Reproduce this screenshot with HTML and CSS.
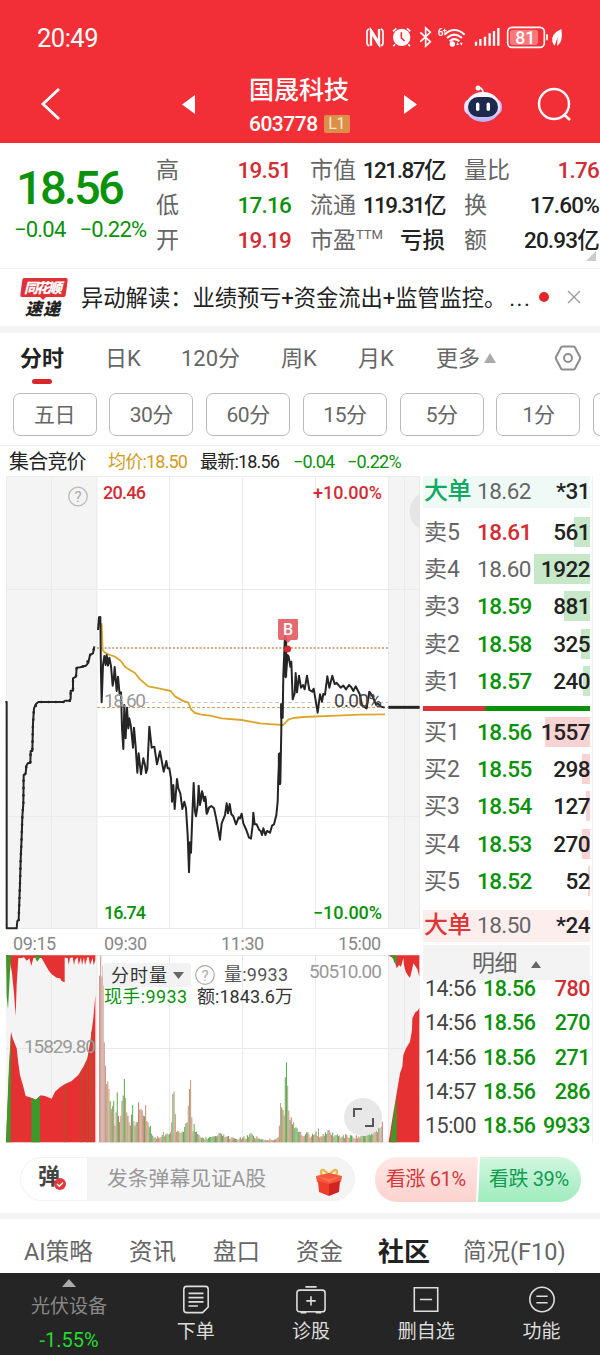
FILE: index.html
```
<!DOCTYPE html>
<html lang="zh-CN">
<head>
	<meta charset="utf-8">
	<title>国晟科技 603778</title>
	<link rel="stylesheet" href="styles.css">
</head>
<body>

	<header class="header">
		<div class="status">
			<span class="clock">20:49</span>
			<svg class="statusIcons" viewBox="195 75 600 75">
				<g fill="none" stroke="#fff" stroke-width="5">
					<path d="M208 87q-7 1-7 9v32q0 8 7 9M242 87q7 1 7 9v32q0 8-7 9"/>
					<path d="M213 137V92l24 40V87" stroke-width="7"/>
					<path d="M213 88l24 38M213 99l24 38" stroke-width="4"/>
					<path d="M279 94l10-9M331 94l-10-9M285 133l-5 6M325 133l5 6" stroke-width="5"/>
					<path d="M361 97l30 28-14 13V84l14 13-30 28" stroke-width="5"/>
					<path d="M433 104q30-28 61 0M441 114q22-20 45 0M449 124q14-13 29 0" stroke-width="6"/>
					<path d="M528 137v-12M541 137v-20M555 137v-27M569 137v-37M582 137V93M595 137V84" stroke-width="7"/>
					<rect x="623" y="82" width="110" height="60" rx="13" stroke-width="5"/>
					<path d="M741 103v18" stroke-width="5"/>
				</g>
				<circle cx="305" cy="112" r="26" fill="#fff"/>
				<path d="M304 97v17l10 9" fill="none" stroke="#f22f36" stroke-width="5"/>
				<circle cx="457" cy="132" r="8" fill="#fff"/>
				<path d="M469 135l4-9 4 9zM480 128l4 9 4-9z" fill="#fff"/>
				<rect x="630" y="89" width="84" height="46" rx="8" fill="#f8797c"/>
				<path d="M784 87q-32 15-27 38 2 9 7 12l9-25-2 26q20-12 13-51z" fill="#fff"/>
				<text x="413" y="107" class="wifiText">6</text>
				<path d="M428 92h12M434 86v12" stroke="#fff" stroke-width="3"/>
				<text x="676" y="131" class="batteryText">81</text>
			</svg>
		</div>
		<div class="titleBar">
			<svg class="back" viewBox="0 0 24 36"><path d="M21 3L5 18l16 15" fill="none" stroke="#fff" stroke-width="2.8"/></svg>
			<svg class="arrow" viewBox="0 0 14 20"><path d="M13 1v19L0 10.500z" fill="#fff"/></svg>
			<div class="stock">
				<div class="stockName">国晟科技</div>
				<div class="stockCode"><span>603778</span><span class="level">L1</span></div>
			</div>
			<svg class="arrow" viewBox="0 0 14 20"><path d="M1 1v19l13-9.500z" fill="#fff"/></svg>
			<svg class="robot" viewBox="0 0 40 38">
				<defs>
					<linearGradient id="shell" x1="0" y1="0" x2="0" y2="1"><stop offset="0" stop-color="#fff"/><stop offset=".6" stop-color="#e6d8ff"/><stop offset="1" stop-color="#b3aefa"/></linearGradient>
				</defs>
				<path d="M14 3q6-1 6 5" fill="none" stroke="#f4dfff" stroke-width="2"/>
				<circle cx="15" cy="3" r="2.500" fill="#fff"/>
				<ellipse cx="5" cy="22" rx="4" ry="7" fill="#efdcff"/>
				<ellipse cx="35" cy="22" rx="4" ry="7" fill="#c9b4ff"/>
				<ellipse cx="20" cy="22" rx="17.500" ry="15" fill="url(#shell)"/>
				<rect x="5" y="12" width="30" height="20" rx="10" fill="#1d2a4d"/>
				<rect x="13" y="17.500" width="3.400" height="8.500" rx="1.700" fill="#fff"/>
				<rect x="23.600" y="17.500" width="3.400" height="8.500" rx="1.700" fill="#fff"/>
			</svg>
			<svg class="search" viewBox="0 0 36 36"><circle cx="17" cy="17" r="15" fill="none" stroke="#fff" stroke-width="2.400"/><path d="M26.500 27l6.500 6" stroke="#fff" stroke-width="2.600"/></svg>
		</div>
	</header>

	<section class="quote">
		<div class="lastPrice">
			<div class="price green">18.56</div>
			<div class="change green"><span>−0.04</span><span>−0.22%</span></div>
		</div>
		<dl class="stats">
			<dt>高</dt><dd class="red">19.51</dd>
			<dt>低</dt><dd class="green">17.16</dd>
			<dt>开</dt><dd class="red">19.19</dd>
		</dl>
		<dl class="stats tight">
			<dt>市值</dt><dd>121.87亿</dd>
			<dt>流通</dt><dd>119.31亿</dd>
			<dt>市盈<sup>TTM</sup></dt><dd class="loss">亏损</dd>
		</dl>
		<dl class="stats">
			<dt>量比</dt><dd class="red">1.76</dd>
			<dt>换</dt><dd>17.60%</dd>
			<dt>额</dt><dd>20.93亿</dd>
		</dl>
		<i class="corner"></i>
	</section>

	<section class="news">
		<svg class="newsLogo" viewBox="0 0 48 40">
			<path d="M4 1h42q2 0 1.700 2l-2 15q-.3 2-2 2H26l-3 3-3-3H2q-2 0-1.700-2l2-15Q2.500 1 4 1z" fill="#df3238"/>
			<text x="4" y="16" class="logoTop" textLength="38">同花顺</text>
			<text x="5" y="37.500" class="logoBottom" textLength="35">速递</text>
		</svg>
		<span class="newsText">异动解读：<span class="newsBody">业绩预亏+资金流出+监管监控。</span><span class="more">...</span></span>
		<i class="dot"></i>
		<svg class="close" viewBox="0 0 14 14"><path d="M1 1l12 12M13 1L1 13" stroke="#999" stroke-width="1.300"/></svg>
	</section>

	<nav class="periods">
		<span class="active">分时</span>
		<span>日K</span>
		<span>120分</span>
		<span>周K</span>
		<span>月K</span>
		<span>更多<i class="up"></i></span>
		<svg class="gear" viewBox="0 0 28 26"><path d="M8.500 1.500h11q1 0 1.500 1l5 9.500q.5 1 0 2l-5 9.500q-.5 1-1.500 1h-11q-1 0-1.500-1L2 14q-.5-1 0-2l5-9.500q.5-1 1.500-1z" fill="none" stroke="#8d8d8d" stroke-width="2"/><circle cx="14" cy="13" r="4" fill="none" stroke="#8d8d8d" stroke-width="2"/></svg>
	</nav>
	<div class="chips">
		<span>五日</span><span>30分</span><span>60分</span><span>15分</span><span>5分</span><span>1分</span><span></span>
	</div>

	<div class="legend">
		<span class="auction">集合竞价</span>
		<span class="avg">均价:18.50</span>
		<span>最新:18.56</span>
		<span class="green">−0.04</span>
		<span class="green">−0.22%</span>
	</div>

	<main class="main">
		<div class="charts">
			<svg class="priceChart" viewBox="0 476 420 454">
				<rect x="6" y="476" width="91" height="453" fill="#f4f4f4"/>
				<rect x="388" y="476" width="32" height="453" fill="#f4f4f4"/>
				<path d="M6 476.500H420M6 589.500H420M6 816.500H420M6 928.500H420M6.500 476V929M51.500 476V929M97 476V929M169.500 476V929M242.500 476V929M315.500 476V929M388.500 476V929M404.500 476V929M419.500 476V929" stroke="#ebebeb" fill="none"/>
				<path d="M420 494a20 20 0 0 0 0 35z" fill="#e5e5e5"/>
				<circle cx="78" cy="496.500" r="9.300" fill="none" stroke="#bbb" stroke-width="1.300"/>
				<text x="78" y="502" class="help">?</text>
				<path d="M97 648H388" stroke="#c29062" stroke-width="1.500" stroke-dasharray="2 1.800"/>
				<path d="M145 702.500H388" stroke="#c9c9c9" stroke-dasharray="4 2.500"/>
				<path d="M97 707.500H388" stroke="#cf9c73" stroke-dasharray="3 2"/>
				<text x="103" y="499" class="red" textLength="43">20.46</text>
				<text x="382" y="499" class="red end" textLength="69">+10.00%</text>
				<text x="104" y="919" class="green" textLength="42">16.74</text>
				<text x="382" y="919" class="green end" textLength="69">−10.00%</text>
				<g transform="translate(0 475) scale(.33333)" fill="none" stroke-linejoin="round">
					<path stroke="#dda62b" stroke-width="5.500" d="M305 445L308 525 315 533 330 540 345 545 362 557 375 575 390 585 405 594 420 613 445 634 480 641 512 648 525 664 548 677 565 683 573 703 585 714 605 719 630 722 665 730 725 735 780 745 820 748 850 750 865 734 880 729 910 726 1010 722 1080 719 1155 718"/>
					<path stroke="#252525" stroke-width="6" d="M16 681H20V1360H50L52 1338 56 1335 60 1225 62 1155 65 1085 67 1025 70 985 71 900 77 896 79 872 84 864 91 864 92 828 97 828 99 745 102 700 108 687 115 681H190L195 677 208 677 212 672V647H219V610L228 605 230 578 240 577 258 572 265 563 270 540 279 535 283 514"/>
					<path stroke="#252525" stroke-width="8" stroke-linecap="round" stroke-dasharray="0 22" d="M56 1335L60 1225 62 1155 65 1085 67 1025 70 985 71 900 77 896 79 872 91 864 92 828 97 828 99 745 102 700 115 681H208L212 672V647H219V610L228 605 230 578 258 572 270 540 279 535 283 514"/>
					<path stroke="#252525" stroke-width="6" d="M294 465L297 427 301 426 303 600 305 682 309 570 313 543 317 570 320 540 324 572 328 548 333 573 338 632 341 615 344 576 350 648 354 605 359 660 363 652 366 760 370 822 373 690 377 790 381 698 385 760 388 730 393 756 399 818 402 758 407 815 412 893 416 835 423 898 430 850 435 870 438 894 442 882 448 755 455 818 463 815 471 868 480 829 491 890 499 858 503 880 508 880 513 910 516 980 520 930 524 1002 531 912 535 940 541 955 547 1002 553 980 558 1000 563 1080 567 1192 570 1102 573 1133 577 1020 581 924 585 1010 588 1024 593 990 596 932 600 990 606 949 611 970 616 965 621 1015 626 1000"/>
				</g>
				<g transform="translate(200 475) scale(.33333)" fill="none" stroke-linejoin="round">
					<path stroke="#252525" stroke-width="6" d="M0 985L6 950 12 978 16 970 20 1016 27 998 34 993 42 1000 48 1028 55 1065 60 1094 65 1045 75 1020 80 985 84 1015 89 987 94 1018 100 1024 108 1048 116 1027 120 1030 125 1016 130 1045 139 1065 147 1088 153 1091 158 1050 160 1013 164 1048 170 1048 177 1064 182 1068 186 1080 190 1060 196 1080 201 1068 210 1073 216 1052 222 1048 229 1020 233 980 235 910 239 835 241 925 244 760 244 690 248 728 250 600 255 480 257 607 263 540 266 545 271 575 274 560 278 673 284 655 287 594 291 652 297 602 303 638 309 630 314 643 321 602 328 645 337 650 341 641 347 676 353 713 360 658 366 680 370 657 375 659 382 604 388 638 397 602 404 627 410 624 422 638 430 632 438 643 447 630 454 637 460 648 467 634 479 657 486 690 495 697 500 700 508 650 519 667 528 689 534 685 541 694 554 698"/>
					<path stroke="#252525" stroke-width="9" d="M238 835V930M245 685V730M257 485V605"/>
					<path d="M565 697H659" stroke="#252525" stroke-width="9"/>
				</g>
				<text x="104" y="707" class="mid" textLength="42">18.60</text>
				<text x="382" y="707" class="mid zero end" textLength="48">0.00%</text>
				<path d="M279 619h18q1 0 1 1v18q0 2-2 2h-5l-3 3-3-3h-5q-2 0-2-2v-18q0-1 1-1z" fill="#e15e65" opacity=".92"/>
				<text x="288" y="635" class="flag">B</text>
				<circle cx="287.500" cy="649" r="3.600" fill="#d62b35"/>
			</svg>
			<div class="times"><span>09:15</span><span>09:30</span><span>11:30</span><span>15:00</span></div>
			<svg class="volumeChart" viewBox="0 955 420 188">
				<rect x="6" y="955" width="91" height="187" fill="#f4f4f4"/>
				<rect x="388" y="955" width="32" height="187" fill="#f4f4f4"/>
				<path d="M6 955.500H420M6 1048.500H420M6 1142H420M51.500 955V1142M97 955V1142M169.500 955V1142M242.500 955V1142M315.500 955V1142M388.500 955V1142M404.500 955V1142" stroke="#e9e9e9" fill="none"/>
				<g transform="translate(0 950) scale(.33333)">
					<path fill="#e63132" d="M18 16H286V30L281 46 278 24 270 44 266 22 262 22 255 45 252 22 246 45 243 22 236 45 233 22 225 30 222 45 218 22 210 24 206 45 203 24 194 23V97L185 93 180 85 170 83 155 73 145 60 135 42 125 25 110 22 100 25 94 48 88 25 80 32 72 22 65 24 55 24 50 105 47 198 42 130 36 70 30 35 18 20z"/>
					<path fill="#3f982a" d="M18 16H34L30 65 24 178 20 140zM105 16H124L119 25 112 35 107 27z"/>
					<path fill="#e63132" d="M18 577L27 370 33 245 38 265 50 295 55 340 60 375 70 410 77 438 90 442 108 449 122 436 135 438 155 446 165 425 180 412 195 402 215 393 235 375 250 350 262 325 270 280 280 205 286 135V577z"/>
					<path fill="#3f982a" d="M18 577L27 345 33 250 32 577zM94 577V443L108 449 120 437V577z"/>
					<path d="M193 405V577M244 362V577M263 325V577M275 245V577" stroke="#986025" stroke-width="3"/>
				</g>
				<g id="volumeBars" transform="translate(0 950) scale(.33333)"></g>
				<g transform="translate(200 950) scale(.33333)">
					<path fill="#e63132" d="M564 16H658V80L652 58 646 48 640 40 636 60 630 83 625 78 617 65 612 45 610 24 603 50 597 45 590 55 583 30 575 22z"/>
					<path fill="#3f982a" d="M570 16H590V42L583 38 579 23z"/>
					<path fill="#e63132" d="M566 577L578 500 590 430 600 370 607 350 610 315 618 295 630 275 636 240 637 205 646 187 653 182 658 174V577z"/>
					<path fill="#3f982a" d="M571 577L580 500 590 437V577z"/>
				</g>
				<text x="24" y="1053" class="mid" textLength="72">15829.80</text>
				<rect x="103" y="963" width="88" height="24" rx="3" fill="#f2f2f2"/>
				<text x="111" y="982" class="dark" textLength="56">分时量</text>
				<path d="M173 972h11l-5.500 7z" fill="#666"/>
				<circle cx="205" cy="975" r="9.300" fill="none" stroke="#aaa" stroke-width="1.200"/>
				<text x="205" y="981" class="help">?</text>
				<text x="224" y="981" class="dark grey" textLength="64">量:9933</text>
				<text x="382" y="978" class="mid end" textLength="73">50510.00</text>
				<text x="104" y="1003" class="green hand" textLength="83">现手:9933</text>
				<text x="197" y="1003" class="dark" textLength="96">额:1843.6万</text>
				<circle cx="363" cy="1117" r="19" fill="#e5e5e5" opacity=".9"/>
				<path d="M354 1117v-8h8M373 1118v8h-8" fill="none" stroke="#555" stroke-width="2"/>
			</svg>
		</div>

		<aside class="book">
			<div class="big bigSell"><span>大单</span><span>18.62</span><span>*31</span></div>
			<div class="side">
				<div class="level5"><span>卖5</span><span class="red">18.61</span><span class="amount"><i class="bar" style="width:16px"></i>561</span></div>
				<div class="level5"><span>卖4</span><span class="grey">18.60</span><span class="amount"><i class="bar" style="width:56px"></i>1922</span></div>
				<div class="level5"><span>卖3</span><span class="green">18.59</span><span class="amount"><i class="bar" style="width:26px"></i>881</span></div>
				<div class="level5"><span>卖2</span><span class="green">18.58</span><span class="amount"><i class="bar" style="width:9px"></i>325</span></div>
				<div class="level5"><span>卖1</span><span class="green">18.57</span><span class="amount"><i class="bar" style="width:7px"></i>240</span></div>
			</div>
			<div class="ratio"><i style="width:62px"></i></div>
			<div class="side buy">
				<div class="level5"><span>买1</span><span class="green">18.56</span><span class="amount"><i class="bar" style="width:45px"></i>1557</span></div>
				<div class="level5"><span>买2</span><span class="green">18.55</span><span class="amount"><i class="bar" style="width:8px"></i>298</span></div>
				<div class="level5"><span>买3</span><span class="green">18.54</span><span class="amount"><i class="bar" style="width:4px"></i>127</span></div>
				<div class="level5"><span>买4</span><span class="green">18.53</span><span class="amount"><i class="bar" style="width:8px"></i>270</span></div>
				<div class="level5"><span>买5</span><span class="green">18.52</span><span class="amount"><i class="bar" style="width:2px"></i>52</span></div>
			</div>
			<div class="big bigBuy"><span>大单</span><span>18.50</span><span>*24</span></div>
			<div class="detailHead">明细<i class="up small"></i></div>
			<div class="details">
				<div><span>14:56</span><span class="green">18.56</span><span class="red">780</span></div>
				<div><span>14:56</span><span class="green">18.56</span><span class="green">270</span></div>
				<div><span>14:56</span><span class="green">18.56</span><span class="green">271</span></div>
				<div><span>14:57</span><span class="green">18.56</span><span class="green">286</span></div>
				<div><span>15:00</span><span class="green">18.56</span><span class="green">9933</span></div>
			</div>
		</aside>
	</main>

	<section class="barrage">
		<div class="barrageInput">
			<div class="barrageIcon">
				<span>弹</span>
				<svg viewBox="0 0 12 12"><circle cx="6" cy="6" r="6" fill="#e03a3c"/><path d="M3 6l2.300 2.300L9 4.500" fill="none" stroke="#fff" stroke-width="1.300"/></svg>
			</div>
			<span class="placeholder">发条弹幕见证A股</span>
			<svg class="gift" viewBox="0 0 28 30">
				<path d="M14 8Q6-1 6 6q0 3 8 3 8 0 8-3 0-7-8 2z" fill="none" stroke="#edb64b" stroke-width="2.500"/>
				<path d="M1 9l13-3 13 3-1 6-12 3L2 15z" fill="#f4573c"/>
				<path d="M3 14l11 3v12L4 25z" fill="#f03c2b"/>
				<path d="M25 14l-11 3v12l10-4z" fill="#cf2420"/>
				<path d="M1 9l13 3 13-3-13 6z" fill="#f9714f"/>
			</svg>
		</div>
		<div class="vote"><span class="voteUp">看涨 61%</span><span class="voteDown">看跌 39%</span></div>
	</section>

	<nav class="sections">
		<span>AI策略</span><span>资讯</span><span>盘口</span><span>资金</span><span class="active">社区</span><span>简况(F10)</span>
	</nav>

	<footer class="toolbar">
		<div class="sector">
			<i class="up"></i>
			<span>光伏设备</span>
			<span class="sectorChange">-1.55%</span>
		</div>
		<div class="tool">
			<svg viewBox="0 0 32 32"><path d="M6 2h20q3 0 3 3v19l-6 6H6q-3 0-3-3V5q0-3 3-3zM8 9.500h16M8 14h16M8 18.500h16M8 23h10"/></svg>
			<span>下单</span>
		</div>
		<div class="tool">
			<svg viewBox="0 0 32 32"><path d="M4 6h24q3 0 3 3v17q0 3-3 3H4q-3 0-3-3V9q0-3 3-3zM10 2.500h12M16 12.500v10M11 17.500h10M5 30h6M21 30h6"/></svg>
			<span>诊股</span>
		</div>
		<div class="tool">
			<svg viewBox="0 0 32 32"><path d="M3.500 3.500h25v25h-25zM9.500 16h13"/></svg>
			<span>删自选</span>
		</div>
		<div class="tool">
			<svg viewBox="0 0 32 32"><circle cx="16" cy="16" r="13"/><path d="M10 12.500h12M10 19.500h12"/></svg>
			<span>功能</span>
		</div>
	</footer>

	<script src="main.js"></script>
</body>
</html>
```

FILE: styles.css
```
* {
	box-sizing: border-box;
}
body {
	margin: 0;
	width: 600px;
	height: 1355px;
	overflow: hidden;
	background: #fff;
	color: #222;
	font-family: Roboto, "Noto Sans CJK SC", sans-serif;
	font-size: 22px;
}
svg {
	display: block;
	flex: none;
}
i {
	display: block;
}
.red {
	color: #d42c33;
	fill: #d42c33;
}
.green {
	color: #0a930a;
	fill: #0a930a;
}
.grey {
	color: #666;
	fill: #666;
}

/* header */
.header {
	height: 143px;
	background: #f22f36;
	color: #fff;
}
.status {
	display: flex;
	justify-content: space-between;
	align-items: center;
	height: 75px;
	padding: 0 35px 0 37px;
}
.clock {
	font-size: 25.500px;
	letter-spacing: -0.5px;
}
.statusIcons {
	width: 200px;
	height: 25px;
}
.wifiText {
	fill: #fff;
	font-size: 30px;
	font-weight: 500;
}
.batteryText {
	fill: #fff;
	font-size: 53px;
	font-weight: 500;
	text-anchor: middle;
}
.titleBar {
	display: flex;
	align-items: center;
	height: 58px;
	padding-left: 38px;
}
.back {
	width: 24px;
	height: 36px;
	margin-right: 120px;
}
.arrow {
	width: 14px;
	height: 20px;
}
.stock {
	width: 104px;
	margin: 5px 50px 0 53px;
}
.stockName {
	height: 34px;
	line-height: 34px;
	font-size: 25px;
	font-weight: 500;
	white-space: nowrap;
}
.stockCode {
	display: flex;
	align-items: center;
	height: 32px;
	font-size: 21px;
	font-weight: 500;
	letter-spacing: -0.5px;
}
.level {
	width: 26px;
	height: 18px;
	margin-left: 6px;
	border-radius: 2px;
	background: #dc8f48;
	color: #ffe9d0;
	font-size: 16px;
	font-weight: 400;
	line-height: 18px;
	text-align: center;
}
.robot {
	width: 40px;
	height: 38px;
	margin-left: 46px;
}
.search {
	width: 36px;
	height: 36px;
	margin: 2px 0 0 34px;
}

/* quote */
.quote {
	position: relative;
	display: grid;
	grid-template-columns: 142px 154px 154px 135px;
	height: 125px;
	padding: 10px 0 0 14px;
}
.price {
	height: 66px;
	padding-left: 2px;
	font-size: 47px;
	font-weight: 500;
	line-height: 70px;
	letter-spacing: -2.800px;
}
.change {
	display: flex;
	gap: 14px;
	line-height: 22px;
	letter-spacing: -0.8px;
	white-space: nowrap;
}
.stats {
	display: grid;
	grid-template-columns: 46px 1fr;
	grid-auto-rows: 35px;
	width: 135px;
	margin: 0;
	line-height: 35px;
	white-space: nowrap;
}
.stats dt {
	color: #666;
	font-size: 23px;
}
.stats dd {
	margin: 0;
	font-size: 22.500px;
	font-weight: 500;
	letter-spacing: -0.8px;
	text-align: right;
}
.stats.tight dd {
	letter-spacing: -1.500px;
}
.stats.tight .loss {
	letter-spacing: 0;
}
.stats sup {
	font-size: 13px;
	line-height: 1px;
}
.corner {
	position: absolute;
	right: 4px;
	bottom: 7px;
	border-bottom: 10px solid #ccc;
	border-left: 10px solid transparent;
}

/* news */
.news {
	display: flex;
	align-items: center;
	height: 65px;
	padding: 0 19px 0 20px;
	border-top: 1px solid #f2f2f2;
	border-bottom: 7px solid #f4f4f4;
}
.newsLogo {
	width: 48px;
	height: 40px;
	margin-top: -2px;
}
.logoTop {
	fill: #fff;
	font-size: 14px;
	font-weight: 900;
	font-style: italic;
}
.logoBottom {
	fill: #222;
	font-size: 17px;
	font-weight: 900;
	font-style: italic;
}
.newsText {
	width: 457px;
	margin: -3px 0 0 13px;
	font-size: 22.300px;
	white-space: nowrap;
}
.newsBody {
	letter-spacing: -0.1px;
}
.more {
	margin-left: 3px;
	letter-spacing: 1.500px;
}
.dot {
	width: 10px;
	height: 10px;
	margin: -2px 0 0 1px;
	border-radius: 5px;
	background: #e0252c;
}
.close {
	width: 14px;
	height: 14px;
	margin: -2px 0 0 auto;
}

/* period tabs */
.periods {
	display: grid;
	grid-template-columns: 85px 76px 100px 77px 78px 118px 28px;
	align-items: center;
	height: 60px;
	padding-left: 20px;
	color: #666;
	line-height: 52px;
}
.periods span {
	height: 60px;
	white-space: nowrap;
}
.periods .active {
	color: #222;
	font-weight: 700;
}
.periods .active::after {
	content: "";
	display: block;
	width: 20px;
	height: 5px;
	margin: -6px 0 0 12px;
	border-radius: 3px;
	background: #d8282e;
}
.up {
	display: inline-block;
	margin-left: 4px;
	border: 6px solid transparent;
	border-top: 0;
	border-bottom: 10px solid #aaa;
	vertical-align: 3px;
}
.gear {
	width: 28px;
	height: 26px;
	margin-top: -10px;
}
.chips {
	display: flex;
	gap: 12.800px;
	height: 53px;
	padding-left: 12.500px;
	border-bottom: 1px solid #eee;
	overflow: hidden;
}
.chips span {
	flex: none;
	width: 84px;
	height: 43px;
	border: 1px solid #bbb;
	border-radius: 7px;
	color: #666;
	font-size: 21px;
	line-height: 43px;
	text-align: center;
	letter-spacing: -0.5px;
}
.chips span:last-child {
	width: 20px;
	border-right: 0;
	border-radius: 7px 0 0 7px;
}

/* legend */
.legend {
	display: grid;
	grid-template-columns: 99px 92px 93px 54px 80px;
	height: 30px;
	padding-left: 9px;
	font-size: 18px;
	line-height: 32px;
	letter-spacing: -0.8px;
	white-space: nowrap;
}
.auction {
	font-size: 20px;
}
.avg {
	color: #d39c1d;
}

/* charts */
.main {
	display: grid;
	grid-template-columns: 423px 170px;
	height: 667px;
}
.priceChart {
	width: 420px;
	height: 454px;
}
.volumeChart {
	width: 420px;
	height: 188px;
}
.charts text {
	font-size: 18px;
	font-weight: 500;
}
.charts text.end {
	text-anchor: end;
}
.charts text.mid {
	fill: #999;
	font-size: 19px;
	font-weight: 400;
}
.charts text.zero {
	fill: #444;
}
.charts text.dark {
	fill: #333;
	font-weight: 400;
}
.charts text.grey {
	fill: #555;
}
.charts text.hand {
	font-weight: 400;
}
.charts text.help {
	fill: #aaa;
	font-size: 15px;
	font-weight: 400;
	text-anchor: middle;
}
.charts text.flag {
	fill: #fff;
	font-size: 16px;
	text-anchor: middle;
}
.times {
	display: grid;
	grid-template-columns: 91px 117px 117px auto;
	height: 25px;
	padding-left: 13px;
	color: #888;
	font-size: 18px;
	line-height: 27px;
	letter-spacing: -0.4px;
}

/* order book */
.book {
	width: 170px;
	padding-right: 2px;
	border-right: 1px solid #f1f1f1;
	font-size: 22.500px;
	letter-spacing: -0.5px;
}
.big,
.level5 {
	display: grid;
	grid-template-columns: 53px 58px 1fr;
	padding-left: 1px;
	white-space: nowrap;
}
.big {
	height: 32px;
	line-height: 31px;
	color: #666;
}
.big span:first-child {
	font-size: 24px;
	font-weight: 500;
}
.big span:last-child {
	color: #222;
	font-weight: 500;
	text-align: right;
}
.bigSell {
	background: #effaf6;
}
.bigSell span:first-child {
	color: #10a963;
}
.bigBuy {
	background: #fdeeee;
}
.bigBuy span:first-child {
	color: #e03535;
}
.side {
	display: grid;
	grid-auto-rows: 30px;
	row-gap: 7.200px;
	padding-top: 9px;
	height: 198px;
	line-height: 31px;
}
.level5 span:first-child {
	color: #666;
	font-size: 23px;
	letter-spacing: 0;
}
.level5 .red,
.level5 .green {
	font-weight: 500;
}
.amount {
	position: relative;
	z-index: 0;
	font-weight: 500;
	text-align: right;
}
.bar {
	position: absolute;
	z-index: -1;
	top: 0;
	right: 0;
	height: 30px;
	background: #c7e7c9;
}
.buy .bar {
	background: #f9d2d3;
}
.ratio {
	height: 5px;
	background: #0a930a;
}
.ratio i {
	height: 5px;
	background: #d93338;
}
.buy {
	height: 199px;
	padding-top: 6px;
}
.detailHead {
	height: 35px;
	margin-top: 3px;
	background: #f3f3f3;
	color: #666;
	font-size: 23px;
	line-height: 38px;
	text-align: center;
}
.up.small {
	margin-left: 14px;
	border-width: 0 5px 7px;
	border-bottom-color: #666;
}
.details {
	margin-top: -9px;
	font-size: 21.500px;
}
.details div {
	display: grid;
	grid-template-columns: 58px 55px 1fr;
	height: 34.300px;
	padding-left: 2px;
	line-height: 36px;
	color: #444;
}
.details .green,
.details .red {
	font-weight: 500;
}
.details span:last-child {
	text-align: right;
}

/* barrage */
.barrage {
	display: flex;
	height: 76px;
	padding: 14px 0 0 20px;
	border-bottom: 6px solid #f4f4f4;
}
.barrageInput {
	display: flex;
	align-items: center;
	width: 335px;
	height: 44px;
	border: 1px solid #f3f3f3;
	border-radius: 22px;
	background: #f4f4f4;
}
.barrageIcon {
	display: flex;
	align-items: center;
	width: 66px;
	height: 42px;
	padding-left: 17px;
	border-radius: 21px 0 0 21px;
	background: #fff;
	color: #444;
	font-weight: 700;
	line-height: 32px;
}
.barrageIcon span {
	margin-top: -5px;
}
.barrageIcon svg {
	width: 12px;
	height: 12px;
	margin: 10px 0 0 -6px;
}
.placeholder {
	width: 210px;
	padding-left: 20px;
	color: #999;
	font-size: 20.800px;
	line-height: 32px;
}
.gift {
	width: 28px;
	height: 30px;
	margin: 6px 0 0 18px;
}
.vote {
	display: flex;
	width: 206px;
	height: 45px;
	margin-left: 20px;
	border-radius: 22px;
	overflow: hidden;
	font-size: 20px;
	line-height: 44px;
	white-space: nowrap;
	letter-spacing: -0.4px;
}
.voteUp {
	width: 103px;
	padding-left: 11px;
	clip-path: polygon(0 0, 100% 0, 98% 100%, 0 100%);
	background: linear-gradient(#ffe8e5, #fcd2ce);
	color: #d5373a;
}
.voteDown {
	width: 104px;
	margin-left: -1px;
	padding-left: 12px;
	clip-path: polygon(3% 0, 100% 0, 100% 100%, 1% 100%);
	background: linear-gradient(#d3f7e1, #9eebbc);
	color: #0f9c50;
}

/* section tabs */
.sections {
	display: grid;
	grid-template-columns: 105px 84px 83px 82px 85px auto;
	height: 54px;
	padding-left: 24px;
	color: #666;
	font-size: 23.500px;
	line-height: 67px;
	white-space: nowrap;
}
.sections .active {
	color: #222;
	font-size: 26px;
	font-weight: 700;
}

/* toolbar */
.toolbar {
	display: grid;
	grid-template-columns: 138px repeat(4, 115.300px);
	height: 82px;
	background: #252525;
	color: #ddd;
	font-size: 19px;
}
.sector {
	display: flex;
	flex-direction: column;
	align-items: center;
	padding-top: 6px;
	color: #888;
}
.sector .up {
	margin: 0;
	border-width: 0 7px 8px;
	border-bottom-color: #aaa;
}
.sector span {
	height: 33px;
	line-height: 40px;
}
.sector .sectorChange {
	color: #20dc2c;
	line-height: 40px;
	font-size: 20px;
}
.tool {
	display: flex;
	flex-direction: column;
	align-items: center;
	padding-top: 10px;
	line-height: 32px;
}
.tool svg {
	width: 30px;
	height: 33px;
	fill: none;
	stroke: #ddd;
	stroke-width: 1.700px;
}
```

FILE: main.js
```
// [x, height] of the volume envelope, the bars in between are interpolated
var volume = [
	[297, 500], [302, 560], [308, 530], [312, 300], [316, 230], [320, 175], [323, 183], [327, 160], [331, 100],
	[338, 125], [345, 90], [351, 150], [355, 80], [360, 80], [366, 125], [373, 190], [377, 90], [383, 80],
	[390, 50], [397, 112], [402, 50], [408, 60], [413, 120], [420, 100], [428, 80], [436, 112], [442, 60],
	[450, 50], [458, 20], [470, 18], [490, 32], [505, 25], [512, 60], [516, 145], [520, 152], [525, 85],
	[530, 35], [545, 32], [560, 60], [566, 160], [570, 187], [574, 75], [580, 55], [590, 25], [605, 15],
	[650, 18], [655, 28], [700, 12], [725, 14], [727, 42], [731, 18], [752, 28], [780, 9], [830, 12],
	[836, 50], [839, 118], [845, 105], [850, 80], [853, 195], [857, 240], [861, 170], [866, 95], [872, 75],
	[880, 60], [890, 42], [900, 32], [920, 30], [940, 22], [953, 42], [960, 18], [982, 36], [1010, 24],
	[1040, 22], [1080, 20], [1100, 26], [1120, 32], [1135, 45], [1147, 62]
];
var colors = ["#c59175", "#c59175", "#d17c70", "#69a553", "#c3a17e", "#4fb657", "#b97d68"];
var bars = document.getElementById("volumeBars");
var k = 0;
var n = 0;

for (var x = 297; x < 1148; x += 3.55) {
	while (k < volume.length - 2 && volume[k + 1][0] < x) {
		k++;
	}
	var a = volume[k];
	var b = volume[k + 1];
	var h = a[1] + (b[1] - a[1]) * (x - a[0]) / (b[0] - a[0]);
	var noise = Math.abs(Math.sin(n * 12.9898) * 43758.5453) % 1;
	h = h * (h > 100 ? 0.9 + noise * 0.1 : 0.5 + noise * 0.6);
	// keep the peaks at their full height
	if (x - a[0] < 1.8) {
		h = a[1];
	} else if (b[0] - x < 1.8) {
		h = b[1];
	}
	var rect = document.createElementNS("http://www.w3.org/2000/svg", "rect");
	rect.setAttribute("x", x);
	rect.setAttribute("y", 577 - h);
	rect.setAttribute("width", 3.1);
	rect.setAttribute("height", h);
	rect.setAttribute("fill", x < 315 ? "#c9968b" : colors[Math.floor(noise * 7)]);
	bars.appendChild(rect);
	n++;
}
```
